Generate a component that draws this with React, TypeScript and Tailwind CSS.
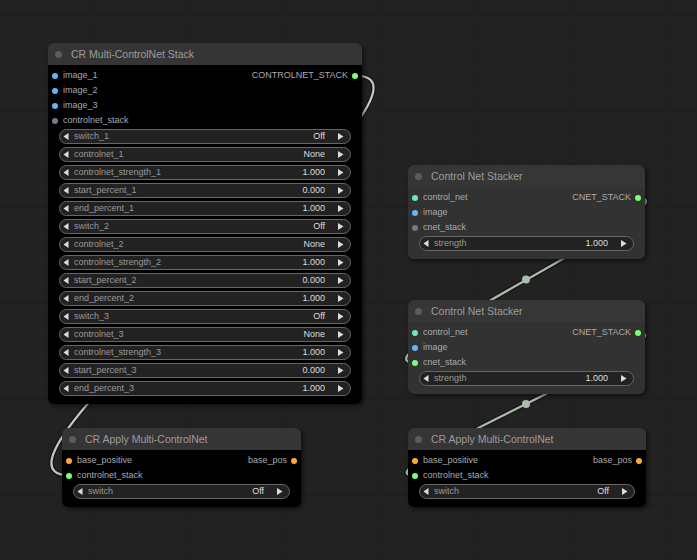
import React from "react";

type Slot = { label: string; dot: string };
type Row = { inp?: Slot; out?: Slot };
type W = { label: string; value: string };

const C = {
  image: "bg-[#64b5f6]",
  cnet: "bg-[#6ee7b7]",
  grey: "bg-[#778]",
  green: "bg-[#7f7]",
  cond: "bg-[#ffa931]",
};

function Dot({ cls }: { cls: string }) {
  return <span className={`block h-[6px] w-[6px] shrink-0 rounded-full ${cls}`} />;
}

function Widget({ label, value }: W) {
  return (
    <div className="relative mx-[11px] flex h-[15px] items-center rounded-full border border-[#666] bg-[#222] text-[9px] leading-none">
      <svg className="absolute left-0 top-[-1px]" width="12" height="15" viewBox="0 0 12 15">
        <polygon points="3.5,7.5 8.5,4 8.5,11" fill="#ddd" />
      </svg>
      <span className="flex-1 pl-[14px] text-[#999]">{label}</span>
      <span className="pr-[25px] text-[#ddd]">{value}</span>
      <svg className="absolute right-0 top-[-1px]" width="14" height="15" viewBox="0 0 14 15">
        <polygon points="2,4 2,11 7.5,7.5" fill="#ddd" />
      </svg>
    </div>
  );
}

function Node({
  pos,
  title,
  titleBg,
  bodyBg,
  rows,
  widgets,
}: {
  pos: string;
  title: string;
  titleBg: string;
  bodyBg: string;
  rows: Row[];
  widgets: W[];
}) {
  return (
    <div className={`absolute ${pos} rounded-[6px] shadow-[2px_2px_4px_rgba(0,0,0,0.55)]`}>
      <div className={`flex h-[22px] items-center rounded-t-[6px] ${titleBg}`}>
        <span className="ml-[7px] block h-[7px] w-[7px] rounded-full bg-[#5c5c5c]" />
        <span className="ml-[9px] text-[10.5px] leading-none text-[#9c9c9c]">{title}</span>
      </div>
      <div className={`rounded-b-[6px] pb-[8px] pt-[3px] ${bodyBg}`}>
        {rows.map((r, i) => (
          <div key={i} className="flex h-[15px] items-center justify-between text-[9px] leading-none text-[#aaa]">
            {r.inp ? (
              <div className="flex items-center gap-[5px] pl-[4px]">
                <Dot cls={r.inp.dot} />
                <span>{r.inp.label}</span>
              </div>
            ) : (
              <div />
            )}
            {r.out ? (
              <div className="flex items-center gap-[4px] pr-[4px]">
                <span>{r.out.label}</span>
                <Dot cls={r.out.dot} />
              </div>
            ) : null}
          </div>
        ))}
        <div className="mt-[1px] flex flex-col gap-[3px]">
          {widgets.map((w, i) => (
            <Widget key={i} {...w} />
          ))}
        </div>
      </div>
    </div>
  );
}

const stackWidgets: W[] = [1, 2, 3].flatMap((n) => [
  { label: `switch_${n}`, value: "Off" },
  { label: `controlnet_${n}`, value: "None" },
  { label: `controlnet_strength_${n}`, value: "1.000" },
  { label: `start_percent_${n}`, value: "0.000" },
  { label: `end_percent_${n}`, value: "1.000" },
]);

function Links() {
  const l1 = "M355 75.5 C477.8 75.5 -52.8 475.5 70 475.5";
  const l2 = "M637 197.5 C706.1 197.5 345.9 362.5 415 362.5";
  const l3 = "M637 332.5 C703 332.5 349 475.5 415 475.5";
  return (
    <svg className="absolute left-0 top-0" width="697" height="560" viewBox="0 0 697 560">
      <defs>
        <pattern id="minor" width="12" height="12" patternUnits="userSpaceOnUse">
          <path d="M12 0 L0 0 0 12" fill="none" stroke="#1f1f1f" strokeWidth="0.6" />
        </pattern>
        <pattern id="major" x="90" y="14" width="96" height="96" patternUnits="userSpaceOnUse">
          <path d="M96 0 L0 0 0 96" fill="none" stroke="#1c1c1c" strokeWidth="1.5" />
        </pattern>
      </defs>
      <rect width="697" height="560" fill="url(#minor)" />
      <rect width="697" height="560" fill="url(#major)" />
      {[l1, l2, l3].map((d, i) => (
        <path key={"b" + i} d={d} fill="none" stroke="rgba(0,0,0,0.35)" strokeWidth="5" />
      ))}
      <path d={l1} fill="none" stroke="#c4c4c4" strokeWidth="2.25" />
      <path d={l2} fill="none" stroke="#a9bba9" strokeWidth="2.25" />
      <path d={l3} fill="none" stroke="#a9bba9" strokeWidth="2.25" />
      <circle cx="526" cy="279.5" r="4" fill="#a9bba9" />
      <circle cx="526" cy="404" r="4" fill="#a9bba9" />
    </svg>
  );
}

export default function App() {
  return (
    <div className="relative h-[560px] w-[697px] overflow-hidden bg-[#222] font-['Liberation_Sans',Arial,sans-serif]">
      <Links />
      <Node
        pos="left-[48px] top-[43px] w-[314px]"
        title="CR Multi-ControlNet Stack"
        titleBg="bg-[#353535]"
        bodyBg="bg-black"
        rows={[
          { inp: { label: "image_1", dot: C.image }, out: { label: "CONTROLNET_STACK", dot: C.green } },
          { inp: { label: "image_2", dot: C.image } },
          { inp: { label: "image_3", dot: C.image } },
          { inp: { label: "controlnet_stack", dot: C.grey } },
        ]}
        widgets={stackWidgets}
      />
      <Node
        pos="left-[408px] top-[165px] w-[237px]"
        title="Control Net Stacker"
        titleBg="bg-[#363636]"
        bodyBg="bg-[#323232]"
        rows={[
          { inp: { label: "control_net", dot: C.cnet }, out: { label: "CNET_STACK", dot: C.green } },
          { inp: { label: "image", dot: C.image } },
          { inp: { label: "cnet_stack", dot: C.grey } },
        ]}
        widgets={[{ label: "strength", value: "1.000" }]}
      />
      <Node
        pos="left-[408px] top-[300px] w-[237px]"
        title="Control Net Stacker"
        titleBg="bg-[#363636]"
        bodyBg="bg-[#323232]"
        rows={[
          { inp: { label: "control_net", dot: C.cnet }, out: { label: "CNET_STACK", dot: C.green } },
          { inp: { label: "image", dot: C.image } },
          { inp: { label: "cnet_stack", dot: C.green } },
        ]}
        widgets={[{ label: "strength", value: "1.000" }]}
      />
      <Node
        pos="left-[62px] top-[428px] w-[239px]"
        title="CR Apply Multi-ControlNet"
        titleBg="bg-[#353535]"
        bodyBg="bg-black"
        rows={[
          { inp: { label: "base_positive", dot: C.cond }, out: { label: "base_pos", dot: C.cond } },
          { inp: { label: "controlnet_stack", dot: C.green } },
        ]}
        widgets={[{ label: "switch", value: "Off" }]}
      />
      <Node
        pos="left-[408px] top-[428px] w-[238px]"
        title="CR Apply Multi-ControlNet"
        titleBg="bg-[#353535]"
        bodyBg="bg-black"
        rows={[
          { inp: { label: "base_positive", dot: C.cond }, out: { label: "base_pos", dot: C.cond } },
          { inp: { label: "controlnet_stack", dot: C.green } },
        ]}
        widgets={[{ label: "switch", value: "Off" }]}
      />
    </div>
  );
}
